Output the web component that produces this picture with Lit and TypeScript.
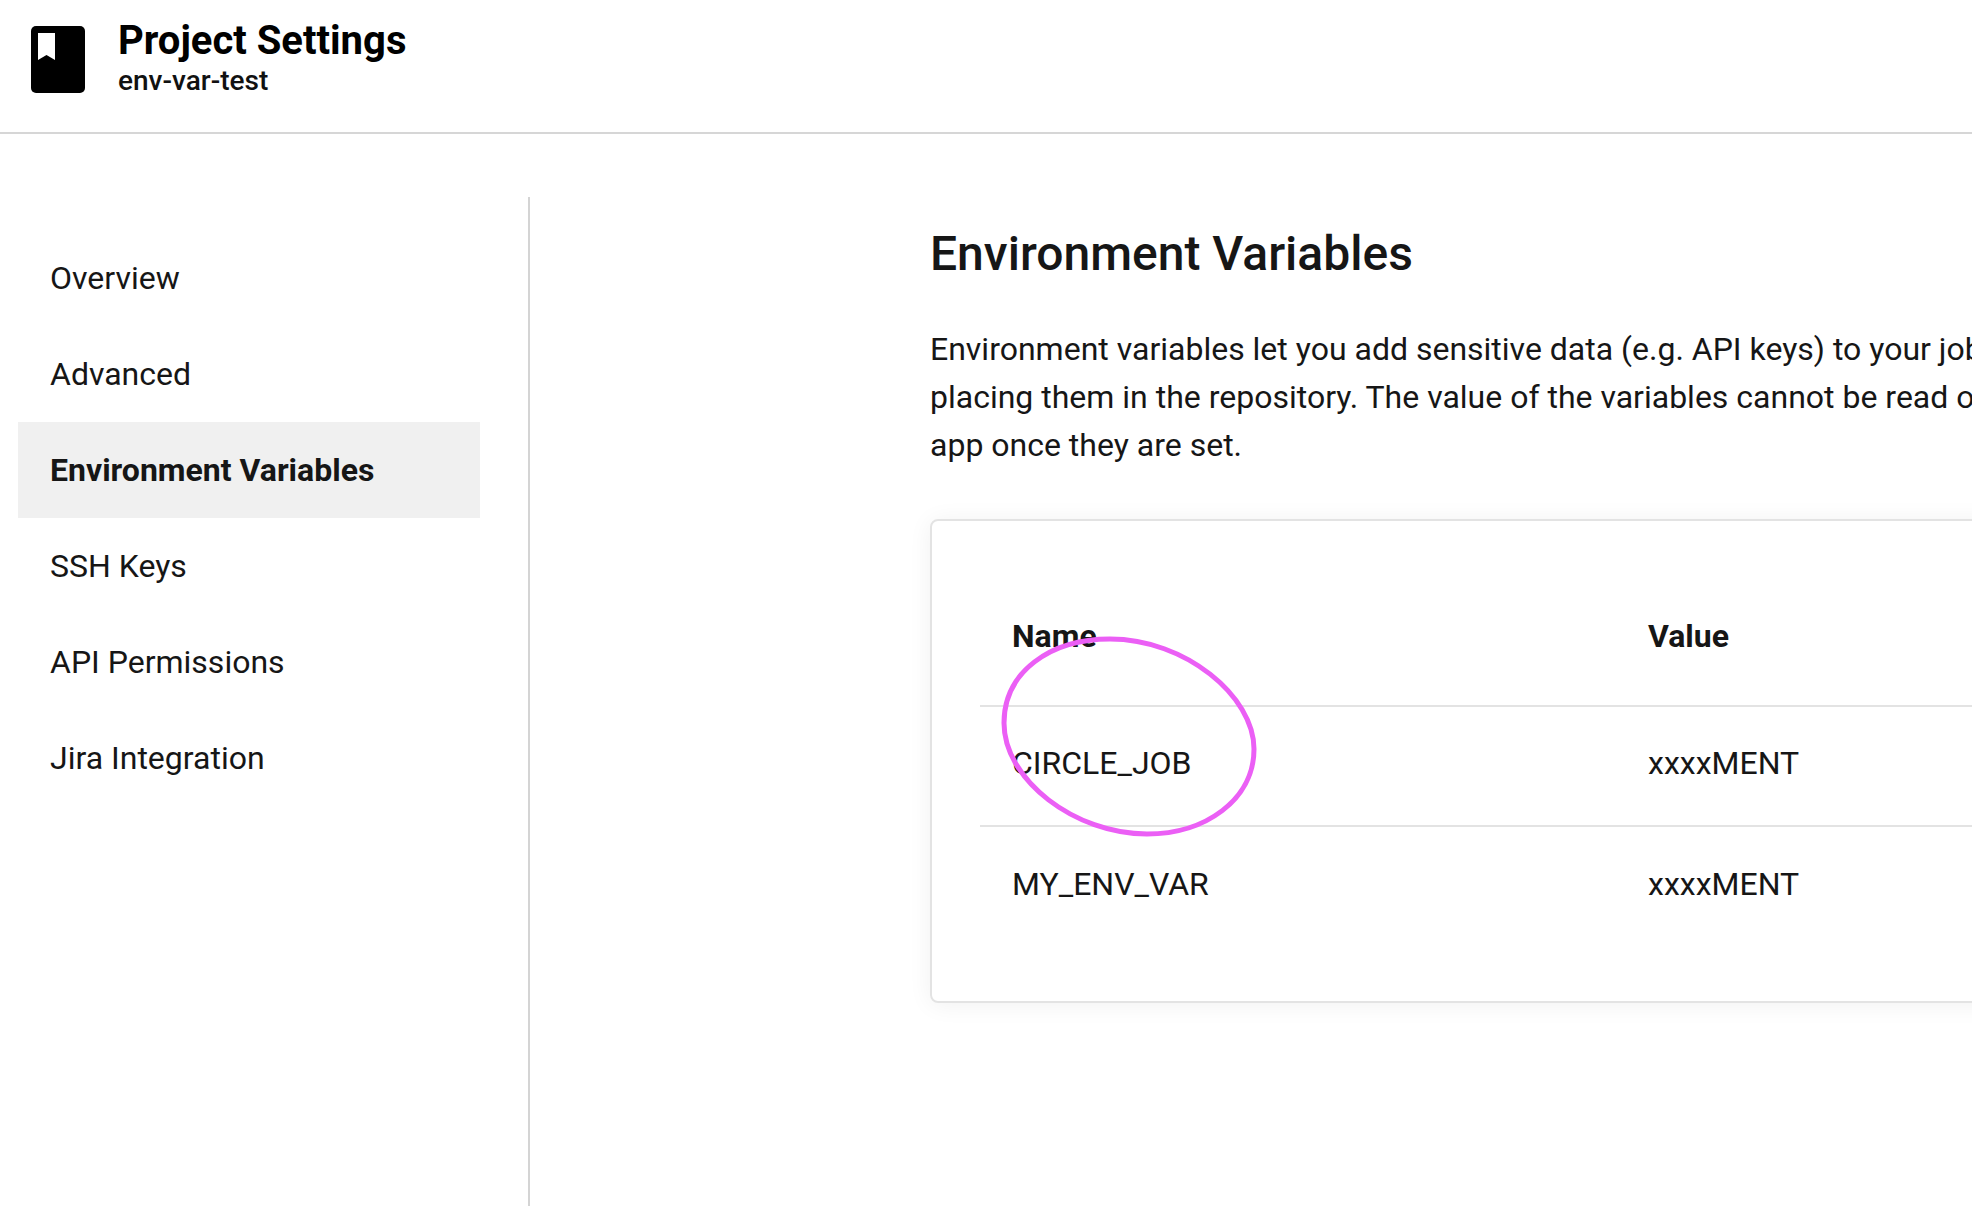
import { LitElement, html, css } from 'lit';
import { customElement } from 'lit/decorators.js';

const NAV = ['Overview', 'Advanced', 'Environment Variables', 'SSH Keys', 'API Permissions', 'Jira Integration'];
const ACTIVE = 'Environment Variables';
const ROWS = [
  ['CIRCLE_JOB', 'xxxxMENT'],
  ['MY_ENV_VAR', 'xxxxMENT'],
];

@customElement('app-root')
export class AppRoot extends LitElement {
  static styles = css`
    :host {
      display: block;
      position: relative;
      width: 1972px;
      height: 1206px;
      overflow: hidden;
      background: #fff;
      color: #161616;
      font-family: Roboto, "Liberation Sans", sans-serif;
    }
    .header {
      display: flex;
      align-items: flex-start;
      gap: 33px;
      height: 114px;
      padding: 18px 0 0 31px;
      border-bottom: 2px solid #d6d6d6;
    }
    .logo { width: 54px; height: 67px; margin-top: 8px; flex: none; }
    .title { font-size: 40px; font-weight: 700; line-height: 46px; color: #000; }
    .subtitle { font-size: 28px; font-weight: 500; line-height: 34px; color: #111; }
    .body { display: flex; padding-top: 63px; height: 1009px; }
    .side {
      width: 530px;
      flex: none;
      padding: 33px 48px 0 18px;
      box-sizing: border-box;
      border-right: 2px solid #d4d4d4;
    }
    .nav-item {
      height: 96px;
      padding-left: 32px;
      display: flex;
      align-items: center;
      font-size: 32px;
      color: #161616;
    }
    .nav-item.active { background: #f0f0f0; font-weight: 700; }
    .main { padding: 29px 0 0 400px; flex: none; width: 1442px; box-sizing: border-box; }
    h1 { margin: 0; font-size: 48px; font-weight: 500; line-height: 56px; }
    p { margin: 43px 0 0; font-size: 32px; line-height: 48px; white-space: nowrap; }
    .card {
      margin-top: 50px;
      width: 1100px;
      height: 484px;
      box-sizing: border-box;
      border: 2px solid #e3e3e3;
      border-radius: 8px;
      box-shadow: 0 2px 24px rgba(0, 0, 0, 0.06);
      padding: 56px 0 0 48px;
    }
    .row {
      display: grid;
      grid-template-columns: 636px 1fr;
      padding: 0 0 7px 32px;
      font-size: 32px;
      height: 120px;
      align-items: center;
      border-bottom: 2px solid #e3e3e3;
      box-sizing: border-box;
    }
    .row.head { height: 130px; font-weight: 700; align-items: start; padding-top: 40px; }
    .row:last-child { border-bottom: none; }
    .circle {
      position: absolute;
      left: 990px;
      top: 625px;
      width: 280px;
      height: 225px;
      fill: none;
      stroke: #eb5ff5;
      stroke-width: 5;
    }
  `;

  render() {
    return html`
      <div class="header">
        <svg class="logo" viewBox="0 0 54 67">
          <path fill="#000" d="M5 0H49A5 5 0 0 1 54 5V62A5 5 0 0 1 49 67H5A5 5 0 0 1 0 62V5A5 5 0 0 1 5 0Z" />
          <path fill="#fff" d="M7 7H24V34L15.5 29L7 34Z" />
        </svg>
        <div>
          <div class="title">Project Settings</div>
          <div class="subtitle">env-var-test</div>
        </div>
      </div>
      <div class="body">
        <div class="side">
          ${NAV.map((n) => html`<div class="nav-item ${n === ACTIVE ? 'active' : ''}">${n}</div>`)}
        </div>
        <div class="main">
          <h1>Environment Variables</h1>
          <p>
            Environment variables let you add sensitive data (e.g. API keys) to your jobs rather than<br />
            placing them in the repository. The value of the variables cannot be read or edited in the<br />
            app once they are set.
          </p>
          <div class="card">
            <div class="row head"><div>Name</div><div>Value</div></div>
            ${ROWS.map((r) => html`<div class="row"><div>${r[0]}</div><div>${r[1]}</div></div>`)}
          </div>
        </div>
      </div>
      <svg class="circle" viewBox="0 0 280 225">
        <path d="M14 98C14 47 60 14 120 14C195 14 264 71 264 124C264 175 215 209 157 209C85 209 14 155 14 98Z" />
      </svg>
    `;
  }
}
